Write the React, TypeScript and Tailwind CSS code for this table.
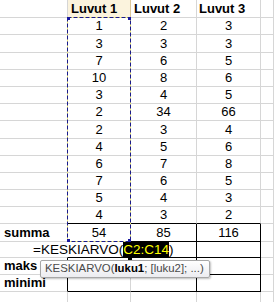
import React from "react";

const data = [
  [1, 2, 3],
  [3, 3, 3],
  [7, 6, 5],
  [10, 8, 6],
  [3, 4, 5],
  [2, 34, 66],
  [2, 3, 4],
  [4, 5, 6],
  [6, 7, 8],
  [7, 6, 5],
  [5, 4, 3],
  [4, 3, 2],
];

const dataHeights = ["h-[17px]", "h-[18px]", "h-[17px]", "h-[17px]", "h-[17px]", "h-[17px]", "h-[18px]", "h-[17px]", "h-[17px]", "h-[17px]", "h-[17px]", "h-[17px]"];

const grid = "border-[#d6d6d6]";

function Cell({ w, className = "", children }: { w: string; className?: string; children?: React.ReactNode }) {
  return (
    <div className={`${w} shrink-0 h-full border-r border-b ${grid} flex items-center overflow-visible whitespace-nowrap ${className}`}>
      {children}
    </div>
  );
}

export default function App() {
  return (
    <div
      className="relative w-[274px] h-[302px] overflow-hidden bg-white text-[13px] text-black"
      style={{ fontFamily: '"Liberation Sans", Arial, sans-serif' }}
    >
      {/* header */}
      <div className="flex h-[18px]">
        <Cell w="w-[68px]" />
        <Cell w="w-[63px]" className="bg-[#fbf3dd] !border-r-[#dcc89c] font-bold pl-[3px]">Luvut 1</Cell>
        <Cell w="w-[66px]" className="font-bold pl-[3px]">Luvut 2</Cell>
        <Cell w="w-[64px]" className="font-bold pl-[2px]">Luvut 3</Cell>
        <Cell w="flex-1" />
      </div>

      {data.map((r, i) => {
        const last = i === data.length - 1;
        return (
          <div key={i} className={`flex ${dataHeights[i]}`}>
            <Cell w="w-[68px]" />
            <Cell w="w-[63px]" className={`justify-center ${last ? "!border-b-black" : ""}`}>{r[0]}</Cell>
            <Cell w="w-[66px]" className={`justify-center ${last ? "!border-b-black" : ""}`}>{r[1]}</Cell>
            <Cell w="w-[64px]" className={`justify-center ${last ? "!border-b-black" : ""}`}>{r[2]}</Cell>
            <Cell w="flex-1" />
          </div>
        );
      })}

      {/* summa */}
      <div className="flex h-[18px]">
        <Cell w="w-[68px]" className="font-bold pl-[4px] !border-r-black">summa</Cell>
        <Cell w="w-[63px]" className="justify-center !border-black">54</Cell>
        <Cell w="w-[66px]" className="justify-center !border-black">85</Cell>
        <Cell w="w-[64px]" className="justify-center !border-black">116</Cell>
        <Cell w="flex-1" />
      </div>

      {/* formula row */}
      <div className="flex h-[16px]">
        <Cell w="w-[68px]" className="!border-r-black" />
        <Cell w="w-[63px]" className="!border-black" />
        <Cell w="w-[66px]" className="!border-black" />
        <Cell w="w-[64px]" className="!border-black" />
        <Cell w="flex-1" />
      </div>

      <div className="flex h-[17px]">
        <Cell w="w-[68px]" className="font-bold pl-[4px] !border-r-black">maks</Cell>
        <Cell w="w-[63px]" className="!border-b-black" />
        <Cell w="w-[66px]" className="!border-black" />
        <Cell w="w-[64px]" className="!border-black" />
        <Cell w="flex-1" />
      </div>

      <div className="flex h-[17px]">
        <Cell w="w-[68px]" className="font-bold pl-[4px] !border-r-black">minimi</Cell>
        <Cell w="w-[63px]" className="!border-b-black" />
        <Cell w="w-[66px]" className="!border-black" />
        <Cell w="w-[64px]" className="!border-black" />
        <Cell w="flex-1" />
      </div>

      <div className="flex h-[20px]">
        <Cell w="w-[68px]" />
        <Cell w="w-[63px]" />
        <Cell w="w-[66px]" />
        <Cell w="w-[64px]" />
        <Cell w="flex-1" />
      </div>

      {/* range marquee */}
      <svg className="absolute left-[67px] top-[17px]" width="64" height="225">
        <rect x="0.5" y="0.5" width="63" height="224" fill="none" stroke="#f4f07a" />
        <rect x="0.5" y="0.5" width="63" height="224" fill="none" stroke="#1a1a8c" strokeDasharray="4 2" />
        <rect x="0" y="0" width="3" height="3" fill="#1a1aa0" />
        <rect x="61" y="0" width="3" height="3" fill="#1a1aa0" />
        <rect x="0" y="222" width="3" height="3" fill="#1a1aa0" />
        <rect x="61" y="222" width="3" height="3" fill="#1a1aa0" />
      </svg>

      {/* cell being edited */}
      <div className="absolute left-[31px] top-[242px] w-[152px] h-[15px] bg-white flex items-center pl-[2px] text-[13.5px] leading-none whitespace-nowrap">
        <span>=KESKIARVO(</span>
        <span className="bg-black text-[#ffff00] h-[15px] flex items-center">C2:C14</span>
        <span>)</span>
      </div>
      <div className="absolute left-[128px] top-[256px] w-[4px] h-[4px] bg-black" />

      {/* function tooltip */}
      <div className="absolute left-[40px] top-[260px] w-[170px] h-[18px] rounded-[2px] border border-[#a7a7a7] bg-gradient-to-b from-white to-[#ececf0] shadow-[1px_1px_2px_rgba(0,0,0,0.25)] flex items-center pl-[4px] text-[11.4px] text-[#4a4a4a] whitespace-nowrap">
        KESKIARVO(<span className="font-bold text-black">luku1</span>; [luku2]; ...)
      </div>
    </div>
  );
}
